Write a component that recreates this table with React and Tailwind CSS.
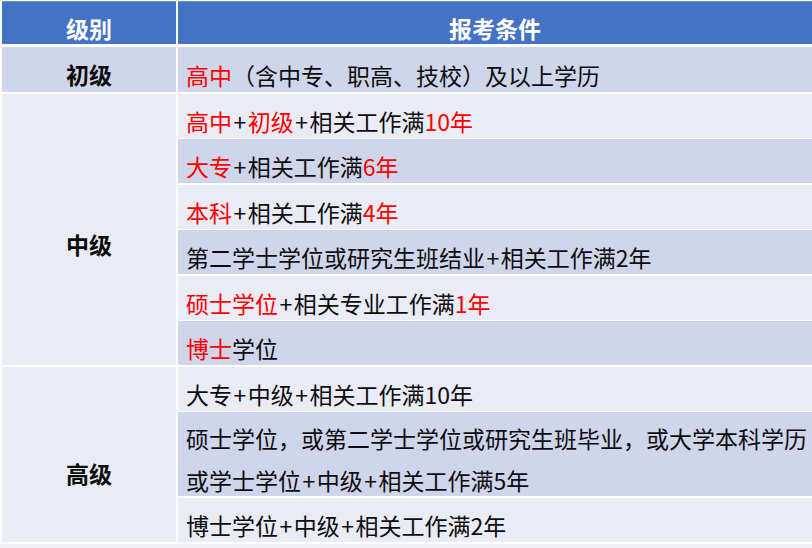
const DARK = "bg-[#CFD5EA]";
const LIGHT = "bg-[#E9EBF5]";

// each row: list of [text, isRed]
const middle = [
  [["高中", 1], ["+", 0], ["初级", 1], ["+相关工作满", 0], ["10年", 1]],
  [["大专", 1], ["+相关工作满", 0], ["6年", 1]],
  [["本科", 1], ["+相关工作满", 0], ["4年", 1]],
  [["第二学士学位或研究生班结业+相关工作满2年", 0]],
  [["硕士学位", 1], ["+相关专业工作满", 0], ["1年", 1]],
  [["博士", 1], ["学位", 0]],
];

// the plus sign in the original font is a bit wider
function Txt({ text }) {
  const bits = text.split("+");
  return bits.map((b, i) => (
    <span key={i}>
      {i > 0 && <span className="mx-[1.5px]">+</span>}
      {b}
    </span>
  ));
}

function Parts({ parts }) {
  return parts.map(([t, red], i) => (
    <span key={i} className={red ? "text-[#FF0000]" : "text-[#0d0d0d]"}>
      <Txt text={t} />
    </span>
  ));
}

function Cell({ bg, children, className = "" }) {
  return (
    <div className={`${bg} flex items-center pl-[8px] pt-[10px] text-[23px] leading-[34px] whitespace-nowrap overflow-hidden ${className}`}>
      {children}
    </div>
  );
}

function Label({ text, pt }) {
  return (
    <div className={`${LIGHT} flex items-center justify-center ${pt} text-[23px] font-bold text-[#0d0d0d]`}>
      {text}
    </div>
  );
}

export default function App() {
  return (
    <div
      className="w-[812px] h-[548px] bg-white overflow-hidden pt-[1px] pl-[2px]"
      style={{ fontFamily: '"Noto Sans CJK SC", "Noto Sans", sans-serif' }}
    >
      {/* header */}
      <div className="flex gap-[2px] h-[43px]">
        <div className="w-[174px] bg-[#4472C4] border-t border-[#6a8fd3] flex items-center justify-center pt-[10px] text-[23px] font-bold text-white">
          级别
        </div>
        <div className="flex-1 bg-[#4472C4] border-t border-[#6a8fd3] flex items-center justify-center pt-[10px] text-[23px] font-bold text-white">
          报考条件
        </div>
      </div>

      {/* body */}
      <div className="mt-[3px] grid grid-cols-[174px_634px] grid-rows-[45px_44px_44px_44px_44px_44px_44px_44px_84px_44px] gap-x-[2px] gap-y-[1.5px]">
        <div className={`${DARK} flex items-center justify-center pt-[10px] text-[23px] font-bold text-[#0d0d0d]`}>初级</div>
        <Cell bg={DARK}>
          <span className="text-[#FF0000]">高中</span>
          <span className="text-[#0d0d0d]">（含中专、职高、技校）及以上学历</span>
        </Cell>

        <Label text="中级" pt="row-span-6 pt-[30px]" />
        {middle.map((parts, i) => (
          <Cell key={i} bg={i % 2 === 0 ? LIGHT : DARK}>
            <Parts parts={parts} />
          </Cell>
        ))}

        <Label text="高级" pt="row-span-3 pt-[38px]" />
        <Cell bg={LIGHT}>
          <span className="text-[#0d0d0d]"><Txt text="大专+中级+相关工作满10年" /></span>
        </Cell>
        <div className={`${DARK} flex flex-col justify-center pl-[8px] pt-[10px] text-[23px] leading-[42px] text-[#0d0d0d] whitespace-nowrap overflow-hidden`}>
          <div>硕士学位，或第二学士学位或研究生班毕业，或大学本科学历</div>
          <div><Txt text="或学士学位+中级+相关工作满5年" /></div>
        </div>
        <Cell bg={LIGHT}>
          <span className="text-[#0d0d0d]"><Txt text="博士学位+中级+相关工作满2年" /></span>
        </Cell>
      </div>

      <div className="mt-[2px] -ml-[2px] h-[6px] bg-[#f0f0f2]" />
    </div>
  );
}
